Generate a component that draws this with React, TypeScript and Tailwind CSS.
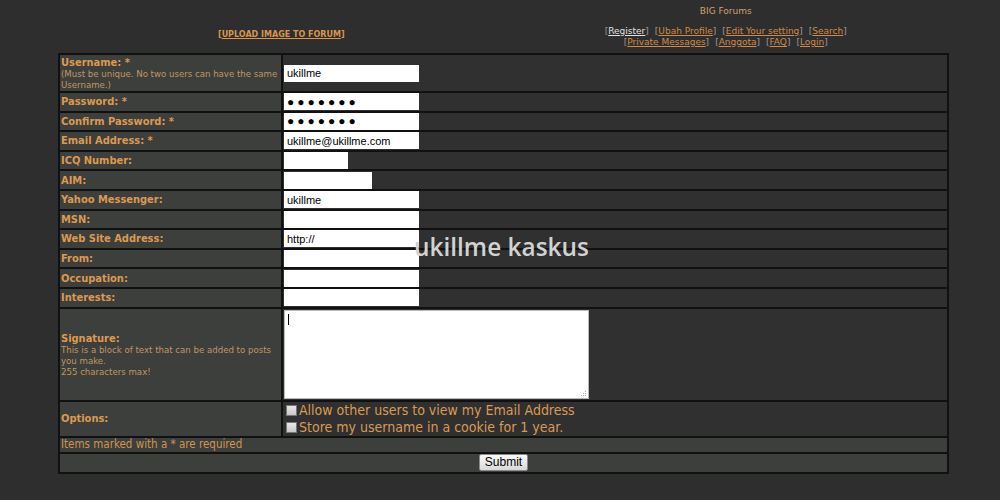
import React from "react";

const LABEL_BG = "bg-[#3c3f3c]";
const VALUE_BG = "bg-[#303030]";

function Label({ children }: { children: React.ReactNode }) {
  return (
    <div className={`${LABEL_BG} flex items-center pl-[1px] pr-[2px] text-[11px] font-bold text-[#dc9950] font-['DejaVu_Sans_Condensed','DejaVu_Sans',sans-serif] leading-[13px]`}>
      {children}
    </div>
  );
}

function TextInput({ value = "", w = 135, password = false }: { value?: string; w?: number; password?: boolean }) {
  return (
    <input
      readOnly
      type="text"
      value={password ? "●●●●●●●" : value}
      style={{ width: w }}
      className={`h-[17px] bg-white border-0 outline-none px-[3px] text-black font-['Liberation_Sans',Arial,sans-serif] ${
        password ? "text-[12px] tracking-[3px]" : "text-[11px]"
      }`}
    />
  );
}

function Row({ label, children, h = "h-[17.6px]" }: { label: React.ReactNode; children?: React.ReactNode; h?: string }) {
  return (
    <div className={`grid grid-cols-[221px_1fr] gap-x-[2px] ${h}`}>
      <Label>{label}</Label>
      <div className={`${VALUE_BG} flex items-center pl-[1px]`}>{children}</div>
    </div>
  );
}

const nav1 = ["Register", "Ubah Profile", "Edit Your setting", "Search"];
const nav2 = ["Private Messages", "Anggota", "FAQ", "Login"];

function NavLine({ items }: { items: string[] }) {
  return (
    <div className="flex justify-center gap-[6px]">
      {items.map((t) => (
        <span key={t} className="text-[#9a9a9a]">
          [
          <span className={`underline ${t === "Register" ? "text-[#e0e0e0]" : "text-[#d08a44]"}`}>{t}</span>]
        </span>
      ))}
    </div>
  );
}

export default function App() {
  return (
    <div className="relative min-h-[500px] w-[1000px] bg-[#2e2e2e] font-['DejaVu_Sans_Condensed','DejaVu_Sans',sans-serif]">
      {/* header */}
      <div className="ml-[59px] grid h-[53px] w-[889px] grid-cols-2 font-['DejaVu_Sans',sans-serif]">
        <div className="flex justify-center pt-[30px]">
          <span className="text-[8px] font-bold leading-[10px] text-[#d9954d]">
            [<span className="underline">UPLOAD IMAGE TO FORUM</span>]
          </span>
        </div>
        <div className="flex flex-col items-center pt-[6px] text-[9px] leading-[11px]">
          <div className="text-[#d0a070]">BIG Forums</div>
          <div className="mt-[9px] flex flex-col">
            <NavLine items={nav1} />
            <NavLine items={nav2} />
          </div>
        </div>
      </div>

      {/* form table */}
      <div className="ml-[58px] flex w-[891px] flex-col gap-[2px] border-2 border-[#111] bg-[#111]">
        <div className="grid h-[36px] grid-cols-[221px_1fr] gap-x-[2px]">
          <div className={`${LABEL_BG} flex flex-col justify-center pl-[1px] pr-[2px] text-[#dc9950]`}>
            <div className="text-[11px] font-bold leading-[13px]">Username: *</div>
            <div className="text-[8.6px] leading-[11px] text-[#c39462] font-['DejaVu_Sans',sans-serif]">
              (Must be unique. No two users can have the same Username.)
            </div>
          </div>
          <div className={`${VALUE_BG} flex items-center pl-[1px]`}>
            <TextInput value="ukillme" />
          </div>
        </div>
        <Row label="Password: *"><TextInput password /></Row>
        <Row label="Confirm Password: *"><TextInput password /></Row>
        <Row label="Email Address: *"><TextInput value="ukillme@ukillme.com" /></Row>
        <Row label="ICQ Number:"><TextInput w={64} /></Row>
        <Row label="AIM:"><TextInput w={88} /></Row>
        <Row label="Yahoo Messenger:"><TextInput value="ukillme" /></Row>
        <Row label="MSN:"><TextInput /></Row>
        <Row label="Web Site Address:"><TextInput value="http://" /></Row>
        <Row label="From:"><TextInput /></Row>
        <Row label="Occupation:"><TextInput /></Row>
        <Row label="Interests:"><TextInput /></Row>

        <div className="grid h-[91px] grid-cols-[221px_1fr] gap-x-[2px]">
          <div className={`${LABEL_BG} flex flex-col justify-center pl-[1px] pr-[2px] pt-[2px] text-[#dc9950]`}>
            <div className="text-[11px] font-bold leading-[13px]">Signature:</div>
            <div className="text-[8.6px] leading-[11px] text-[#c39462] font-['DejaVu_Sans',sans-serif]">
              This is a block of text that can be added to posts you make.
              <br />
              255 characters max!
            </div>
          </div>
          <div className={`${VALUE_BG} flex items-center pl-[1px]`}>
            <div className="relative">
              <textarea
                readOnly
                className="block h-[89px] w-[305px] resize-none border border-[#b8b8b8] bg-white outline-none"
              />
              <span className="absolute left-[4px] top-[4px] h-[11px] w-[1px] bg-black" />
              <svg className="absolute bottom-[2px] right-[2px]" width="7" height="7" viewBox="0 0 7 7">
                <rect x="5" y="1" width="1" height="1" fill="#aaa" />
                <rect x="3" y="3" width="1" height="1" fill="#aaa" />
                <rect x="5" y="3" width="1" height="1" fill="#aaa" />
                <rect x="1" y="5" width="1" height="1" fill="#aaa" />
                <rect x="3" y="5" width="1" height="1" fill="#aaa" />
                <rect x="5" y="5" width="1" height="1" fill="#aaa" />
              </svg>
            </div>
          </div>
        </div>

        <div className="grid h-[34px] grid-cols-[221px_1fr] gap-x-[2px]">
          <Label>Options:</Label>
          <div className={`${VALUE_BG} flex flex-col justify-center pl-[3px] text-[14px] leading-[17px] text-[#dc9950]`}>
            <label className="flex items-center gap-[2px]">
              <span className="inline-block h-[11px] w-[11px] border border-[#777] bg-gradient-to-b from-[#e8e8e8] to-[#c8c8c8]" />
              Allow other users to view my Email Address
            </label>
            <label className="flex items-center gap-[2px]">
              <span className="inline-block h-[11px] w-[11px] border border-[#777] bg-gradient-to-b from-[#e8e8e8] to-[#c8c8c8]" />
              Store my username in a cookie for 1 year.
            </label>
          </div>
        </div>

        <div className={`${LABEL_BG} flex h-[14px] items-center pl-[1px] pr-[2px] text-[11.5px] text-[#d09450]`}>
          Items marked with a * are required
        </div>

        <div className={`${LABEL_BG} flex h-[18px] items-center justify-center`}>
          <button className="h-[17px] w-[49px] rounded-[2px] border border-[#8a8a8a] bg-gradient-to-b from-[#fafafa] to-[#d8d8d8] text-[12px] leading-[15px] text-black font-['Liberation_Sans',Arial,sans-serif]">
            Submit
          </button>
        </div>
      </div>

      {/* watermark */}
      <div className="pointer-events-none absolute left-[414px] top-[229px] text-[24.4px] font-semibold text-[#d2d2d2] font-['Open_Sans',sans-serif]">
        ukillme kaskus
      </div>
    </div>
  );
}
